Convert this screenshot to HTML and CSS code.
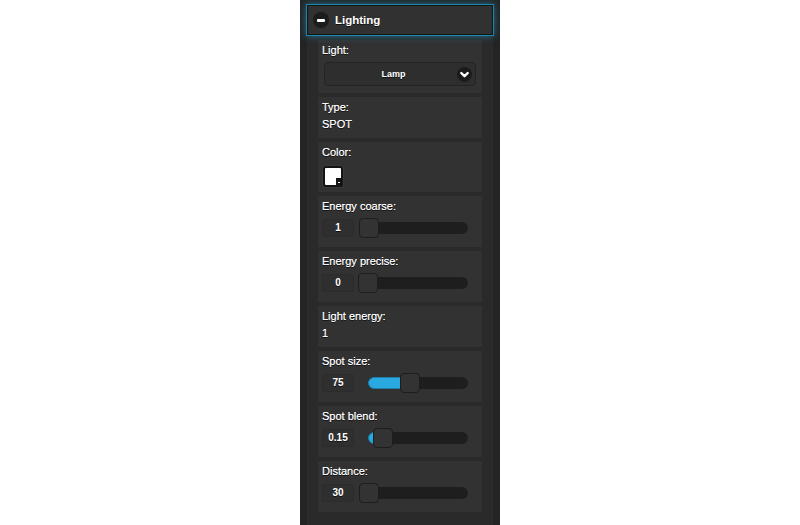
FILE: index.html
```html
<!DOCTYPE html>
<html lang="en">
<head>
<meta charset="utf-8">
<title>Lighting</title>
<link rel="stylesheet" href="styles.css">
</head>
<body>
<div class="panel">
  <div class="collapsible">
    <div class="coll-header">
      <span class="coll-icon"><span class="minus"></span></span>
      <span class="coll-title">Lighting</span>
    </div>
    <div class="coll-content">
      <div class="field">
        <div class="label">Light:</div>
        <div class="select">
          <span class="select-text">Lamp</span>
          <svg class="select-icon" width="15" height="15" viewBox="0 0 15 15"><circle cx="7.5" cy="7.5" r="7.5" fill="#1b1b1b"/><path d="M4.3 6 L7.5 9.2 L10.7 6" fill="none" stroke="#fff" stroke-width="2.4" stroke-linecap="round" stroke-linejoin="round"/></svg>
        </div>
      </div>
      <div class="field">
        <div class="label">Type:</div>
        <div class="value">SPOT</div>
      </div>
      <div class="field">
        <div class="label">Color:</div>
        <div class="swatch"><span class="swatch-corner"></span></div>
      </div>
      <div class="field">
        <div class="label">Energy coarse:</div>
        <div class="slider-row">
          <div class="num">1</div>
          <div class="track"><span class="handle" style="left:1%"></span></div>
        </div>
      </div>
      <div class="field">
        <div class="label">Energy precise:</div>
        <div class="slider-row">
          <div class="num">0</div>
          <div class="track"><span class="handle" style="left:0%"></span></div>
        </div>
      </div>
      <div class="field">
        <div class="label">Light energy:</div>
        <div class="value">1</div>
      </div>
      <div class="field">
        <div class="label">Spot size:</div>
        <div class="slider-row">
          <div class="num">75</div>
          <div class="track"><div class="fill" style="width:41.67%"></div><span class="handle" style="left:41.67%"></span></div>
        </div>
      </div>
      <div class="field">
        <div class="label">Spot blend:</div>
        <div class="slider-row">
          <div class="num">0.15</div>
          <div class="track"><div class="fill" style="width:15%"></div><span class="handle" style="left:15%"></span></div>
        </div>
      </div>
      <div class="field">
        <div class="label">Distance:</div>
        <div class="slider-row">
          <div class="num">30</div>
          <div class="track"><span class="handle" style="left:0.6%"></span></div>
        </div>
      </div>
    </div>
  </div>
</div>
</body>
</html>
```

FILE: styles.css
```css
* { box-sizing: border-box; margin: 0; padding: 0; }
html, body { height: 100%; }
body {
  background: #ffffff;
  font-family: "Liberation Sans", Arial, Helvetica, sans-serif;
  color: #ffffff;
}
.panel {
  width: 200px;
  min-height: 100vh;
  margin: 0 auto;
  background: #242424;
  padding: 5px 7px 0;
  display: flex;
  flex-direction: column;
}
.collapsible {
  flex: 1;
  display: flex;
  flex-direction: column;
  background: #2a2a2a;
}
.coll-header {
  position: relative;
  z-index: 1;
  height: 30px;
  display: flex;
  align-items: center;
  padding-left: 5px;
  background: #313131;
  border: 1px solid #151515;
  box-shadow: 0 0 0 1px rgba(30, 150, 200, 0.75), 0 0 7px 1px rgba(34, 160, 210, 0.6);
}
.coll-icon {
  width: 16px;
  height: 16px;
  border-radius: 50%;
  background: #1c1c1c;
  display: flex;
  align-items: center;
  justify-content: center;
}
.minus {
  width: 8px;
  height: 3px;
  border-radius: 1px;
  background: #ffffff;
}
.coll-title {
  margin-left: 6px;
  font-size: 11.5px;
  font-weight: bold;
  text-shadow: 0 1px 0 #111;
}
.coll-content {
  flex: 1;
  padding: 5px 11px;
  display: flex;
  flex-direction: column;
  gap: 4px;
}
.field {
  background: #323232;
  padding: 3px 4px;
}
.label {
  font-size: 11px;
  line-height: 15px;
  text-shadow: 0 1px 0 #111, 0 0 0.4px #fff;
}
.value {
  font-size: 11px;
  line-height: 18px;
  margin-bottom: 2px;
  text-shadow: 0 1px 0 #111, 0 0 0.4px #fff;
}
.select {
  margin: 4px 2px 4px;
  height: 24px;
  display: flex;
  align-items: center;
  padding: 0 3px 0 8px;
  background: #2e2e2e;
  border: 1px solid #242424;
  border-radius: 4px;
}
.select-text {
  flex: 1;
  margin-right: 3px;
  text-align: center;
  font-size: 9px;
  font-weight: bold;
  text-shadow: 0 1px 0 #111;
}
.select-icon { display: block; }
.swatch {
  position: relative;
  margin: 6px 0 2px 1px;
  width: 20px;
  height: 21px;
  background: #ffffff;
  border: 2px solid #141414;
  border-radius: 3px;
  box-shadow: 0 0 0 1px #3a3a3a;
}
.swatch-corner {
  position: absolute;
  right: -2px;
  bottom: -2px;
  width: 7px;
  height: 9px;
  background: #141414;
  border-radius: 0 0 3px 0;
}
.swatch-corner::after {
  content: "";
  position: absolute;
  left: 2px;
  top: 4px;
  width: 2px;
  height: 1px;
  background: #ffffff;
}
.slider-row {
  display: flex;
  align-items: center;
  height: 20px;
  margin: 4px 0 6px;
}
.num {
  width: 32px;
  height: 18px;
  background: #2f2f2f;
  border: 1px solid #2b2b2b;
  border-radius: 3px;
  font-size: 10px;
  font-weight: bold;
  line-height: 16px;
  text-align: center;
  text-shadow: 0 1px 0 #111;
}
.track {
  position: relative;
  margin-left: 14px;
  width: 100px;
  height: 12px;
  background: #1e1e1e;
  border-radius: 6px;
}
.fill {
  height: 100%;
  background: #29a9df;
  border: 1px solid #1c7ea6;
  border-radius: 6px 0 0 6px;
}
.handle {
  position: absolute;
  top: -4px;
  width: 20px;
  height: 20px;
  margin-left: -10px;
  background: #333333;
  border: 1px solid #1d1d1d;
  border-radius: 4px;
}
```
